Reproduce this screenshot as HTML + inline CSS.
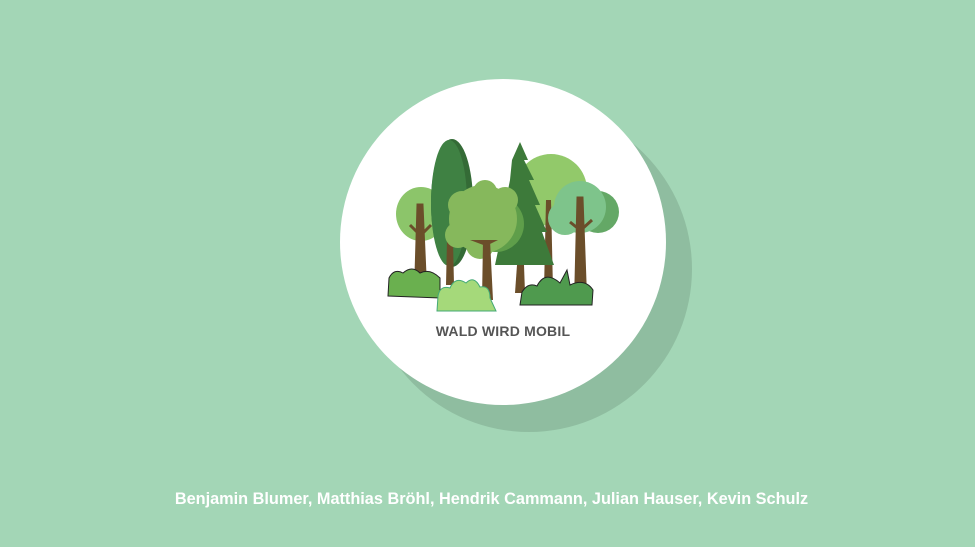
<!DOCTYPE html>
<html><head><meta charset="utf-8"><style>
html,body{margin:0;padding:0;width:975px;height:547px;background:#a3d6b6;overflow:hidden;font-family:"Liberation Sans",Arial,sans-serif}
.foot{position:absolute;left:0;width:975px;top:490px;text-align:center;color:#fff;font-weight:bold;font-size:16.3px;padding-left:4px}
</style></head><body>
<svg width="975" height="547" style="position:absolute;left:0;top:0">
<circle cx="529" cy="269" r="163" fill="#8fbda0"/>
<circle cx="503" cy="242" r="163" fill="#fff"/>
<circle cx="551" cy="190" r="36" fill="#92c96a"/>
<path d="M546 200 L551 200 L553 290 L544 290Z" fill="#6b4e2a"/>
<ellipse cx="421" cy="214" rx="25" ry="27" fill="#8cc56a"/>
<path d="M418 205 L422 205 L425 275 L416 275Z M420 235 L410 225 M421 235 L431 225" fill="#6b4e2a" stroke="#6b4e2a" stroke-width="3"/>
<ellipse cx="452" cy="203" rx="21" ry="64" fill="#346b36"/>
<ellipse cx="449" cy="203" rx="18" ry="63" fill="#3f8143"/>
<path d="M447 240 L453 240 L454 285 L446 285Z" fill="#6b4e2a"/>
<path d="M520 142 L528 160 L524 160 L534 180 L529 180 L540 205 L535 205 L547 232 L542 232 L554 265 L495 265 L502 232 L505 205 L510 180 L512 160 Z" fill="#3d7a3a"/>
<path d="M517 265 L524 265 L525 293 L515 293Z" fill="#6b4e2a"/>
<circle cx="496" cy="224" r="28" fill="#5f9e4a"/>
<g fill="#86b85c">
<circle cx="483" cy="219" r="34"/>
<circle cx="462" cy="205" r="14"/><circle cx="485" cy="192" r="12"/><circle cx="505" cy="200" r="13"/>
<circle cx="458" cy="235" r="13"/><circle cx="480" cy="245" r="14"/>
</g>
<path d="M483 240 L490 240 L493 300 L482 300Z M470 240 L498 240 L486 246Z" fill="#6b4e2a"/>
<circle cx="598" cy="212" r="21" fill="#64a866"/>
<circle cx="580" cy="207" r="26" fill="#7ec48b"/>
<circle cx="565" cy="218" r="17" fill="#7ec48b"/>
<path d="M578 198 L582 198 L585 282 L576 282Z M580 230 L570 222 M581 230 L592 220" fill="#6b4e2a" stroke="#6b4e2a" stroke-width="3"/>
<path d="M388 296 L389 278 Q394 268 403 273 Q412 265 420 273 Q430 268 440 278 L440 298Z" fill="#6ab04f" stroke="#222" stroke-width="1"/>
<path d="M520 305 L522 292 Q528 282 537 286 Q545 270 560 283 L567 270 L570 285 Q585 278 593 290 L592 305Z" fill="#4f9a4e" stroke="#222" stroke-width="1"/>
<path d="M437 311 L438 296 Q440 285 450 288 Q455 276 466 283 Q474 275 480 287 Q490 285 490 298 L496 311Z" fill="#a5d97a" stroke="#4a7" stroke-width="1"/>
<text x="503" y="336" text-anchor="middle" font-family="Liberation Sans,Arial,sans-serif" font-weight="bold" font-size="14" letter-spacing="0.2" fill="#555">WALD WIRD MOBIL</text>
</svg>
<div class="foot">Benjamin Blumer, Matthias Bröhl, Hendrik Cammann, Julian Hauser, Kevin Schulz</div>
</body></html>
